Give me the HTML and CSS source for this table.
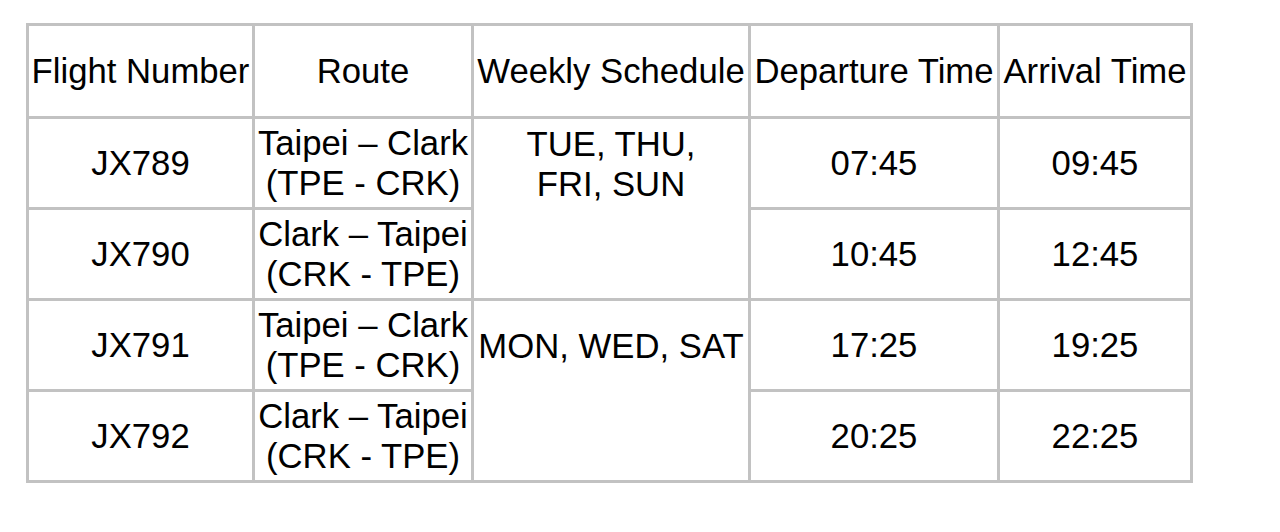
FILE: index.html
```html
<!DOCTYPE html>
<html>
<head>
<meta charset="utf-8">
<link rel="stylesheet" href="styles.css">
</head>
<body>
<table class="flights">
  <colgroup>
    <col class="c1"><col class="c2"><col class="c3"><col class="c4"><col class="c5">
  </colgroup>
  <thead>
    <tr class="head">
      <th>Flight Number</th>
      <th>Route</th>
      <th>Weekly Schedule</th>
      <th>Departure Time</th>
      <th>Arrival Time</th>
    </tr>
  </thead>
  <tbody>
    <tr>
      <td>JX789</td>
      <td>Taipei – Clark<br>(TPE - CRK)</td>
      <td>TUE, THU,<br>FRI, SUN</td>
      <td>07:45</td>
      <td>09:45</td>
    </tr>
    <tr>
      <td>JX790</td>
      <td>Clark – Taipei<br>(CRK - TPE)</td>
      <td class="cont"></td>
      <td>10:45</td>
      <td>12:45</td>
    </tr>
    <tr>
      <td>JX791</td>
      <td>Taipei – Clark<br>(TPE - CRK)</td>
      <td>MON, WED, SAT</td>
      <td>17:25</td>
      <td>19:25</td>
    </tr>
    <tr>
      <td>JX792</td>
      <td>Clark – Taipei<br>(CRK - TPE)</td>
      <td class="cont"></td>
      <td>20:25</td>
      <td>22:25</td>
    </tr>
  </tbody>
</table>
</body>
</html>
```
FILE: styles.css
```css
html, body {
  margin: 0;
  padding: 0;
  background: #ffffff;
}
body {
  font-family: "Liberation Sans", Arial, sans-serif;
  color: #000000;
}
.flights {
  margin: 23px 0 0 26px;
  border-collapse: collapse;
  table-layout: fixed;
  width: 1164px;
  font-size: 34.7px;
  line-height: 40px;
}
.c1 { width: 226px; }
.c2 { width: 219px; }
.c3 { width: 277px; }
.c4 { width: 249px; }
.c5 { width: 193px; }
.flights th,
.flights td {
  border: 3px solid #c2c2c2;
  padding: 0;
  text-align: center;
  vertical-align: middle;
  font-weight: normal;
  white-space: nowrap;
  overflow: visible;
}
.flights .head th {
  height: 90px;
}
.flights td {
  height: 88px;
}
.flights td.cont {
  border-top-style: hidden;
}
```
